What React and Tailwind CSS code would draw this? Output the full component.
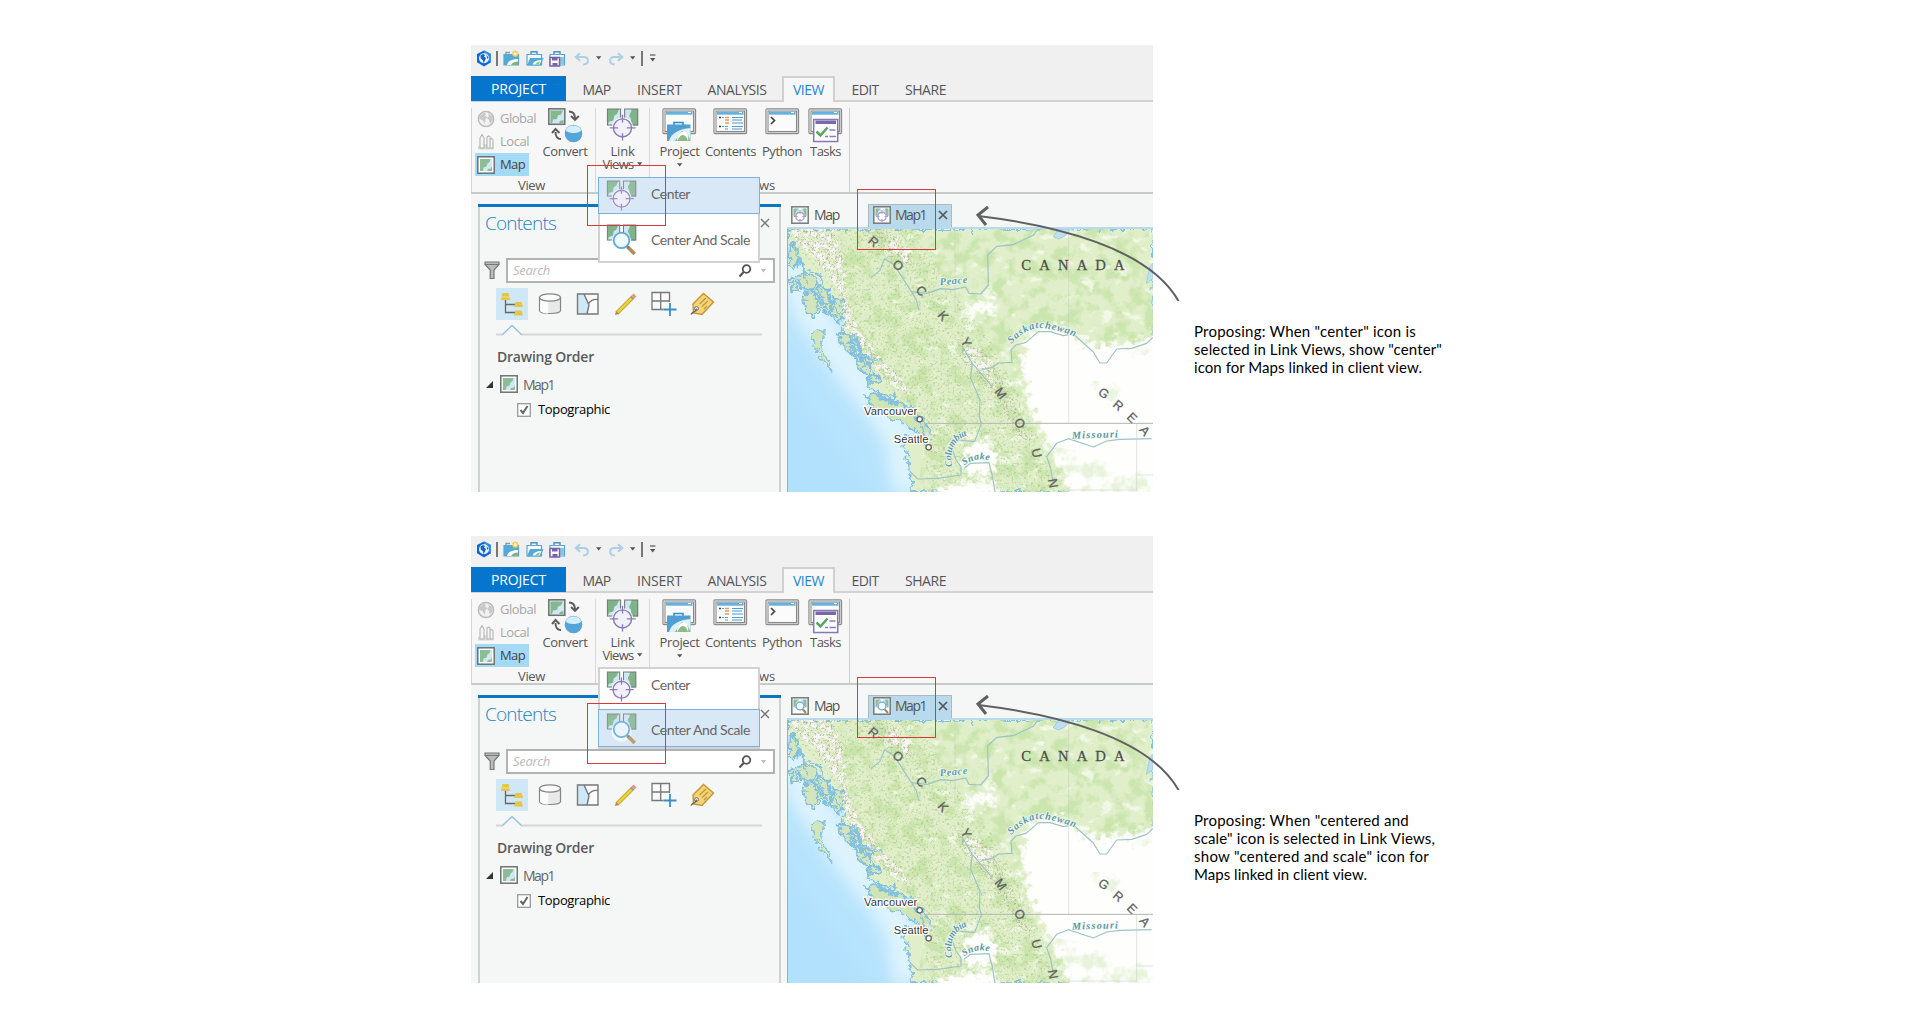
import React, { useLayoutEffect, useRef, useState } from "react";

/* Text on one line, spaced so that it fills the given width. */
function Fit({ w, className = "", children }) {
  const ref = useRef(null);
  const [ls, setLs] = useState(0);
  useLayoutEffect(() => {
    const natural = ref.current.getBoundingClientRect().width;
    setLs((w - natural) / children.length);
  }, []);
  return (
    <span ref={ref} style={{ letterSpacing: ls + "px" }} className={"inline-block shrink-0 whitespace-nowrap " + className}>
      {children}
    </span>
  );
}

const Svg = ({ w, h, vb, className = "", children }) => (
  <svg width={w} height={h} viewBox={vb || `0 0 ${w} ${h}`} className={"block shrink-0 " + className} fill="none">
    {children}
  </svg>
);

const Caret = ({ className = "" }) => (
  <Svg w={6} h={4} className={className}><path d="M0 .3h5.4L2.7 3.4z" fill="#555" /></Svg>
);

/* Quick access icons */
const Logo = () => (
  <Svg w={16} h={17}>
    <path d="M8 .5l7 3.600v8.200L8 16.400 1 12.300V4.100z" fill="#1467d3" />
    <path d="M8 .5l7 3.600v8.200L8 8z" fill="#2d8cf0" />
    <circle cx="8" cy="8.300" r="5" fill="#e6f5ff" />
    <path d="M4.500 5.500l2.500-1.500 2 1-1 1.600 2 1.400-1.200 3-1.200 2-.9-3-2-1.500zM10.500 5l2 2.400-1.200 1.500z" fill="#1c63bb" />
  </Svg>
);
const Case = ({ kind }) => (
  <Svg w={18} h={17}>
    {kind !== "new" && <path d="M5 4.500V1.700h6v2.800" stroke="#4a93c5" strokeWidth="1.400" />}
    {kind === "new" && <path d="M3 4.500V2.500h4" stroke="#7c9fb5" strokeWidth="1.300" />}
    <path d="M1 4.500h14.500v10.500H1z" fill={kind === "new" ? "#55a9d6" : "#f4fafc"} stroke="#5aa6d0" strokeWidth="1.200" />
    {kind === "open" && <path d="M4 8h13.500l-2.700 7.500H1z" fill="#55a9d6" />}
    {kind === "new" && <path d="M4 15c1-4 5-6 11-6v6z" fill="#fff" />}
    {kind === "new" && <path d="M8 15c1.500-2.500 4-3.500 7-3.500V15z" fill="#79b873" />}
    {kind === "open" && <path d="M6.500 14.500c1-3 4-4.500 9-4.500l-2 4.500z" fill="#fff" />}
    {kind === "open" && <path d="M9 14.600c1-2 3-3 5-3.200l-1.400 3.200z" fill="#8dc081" />}
    {kind === "save" && <path d="M9 7h6v7.500h-4z" fill="#8fc6d8" />}
    {kind === "save" && <path d="M1 7.500h9.500V16H1z" fill="#fff" stroke="#7a61a8" strokeWidth="1.500" />}
    {kind === "save" && <path d="M3 7.600h5.500v3H3zM3.500 13h5v3h-5z" fill="#7a61a8" />}
    {kind === "new" && <circle cx="12.300" cy="3.800" r="2.500" fill="#fdf3b5" stroke="#e5c64c" strokeWidth="1.700" strokeDasharray="1.600 .5" />}
  </Svg>
);
const Undo = ({ flip }) => (
  <Svg w={16} h={14} className={flip ? "-scale-x-100" : ""}>
    <path d="M6 1.200L1.700 5 6 8.800M2 5h8c5.300 0 5.300 7.400-.8 7.400" stroke="#abcfe6" strokeWidth="2" />
  </Svg>
);

/* Map thumbnails */
const MapTile = ({ s = 18, className = "" }) => (
  <Svg w={s} h={s} vb="0 0 18 18" className={className}>
    <rect x=".8" y=".8" width="16.400" height="16.400" fill="#fff" stroke="#6d7172" strokeWidth="1.500" />
    <path d="M3 3h12v12H3z" fill="#cfe8f2" />
    <path d="M3 3h10.500l-1 3-2 1.500-1 3-3 1L6 15H3zM10 15l1-2 3-.5 1-2.500v5z" fill="#8cbd94" />
  </Svg>
);
const Tiles = () => (
  <g>
    <path d="M1 1h14v17H1zM18.500 1h14v17h-14z" fill="#cfe6f5" />
    <path d="M1 1h12l-2 5-3 2-1 5-4 1-2 4zM25.500 1h7v17h-6c-2.500-3 0-6-2-8-3-3 2-5 1-9z" fill="#7fb489" />
    <path d="M1 1h13.500v16.500H1zM18.700 1h13.500v16.500H18.700z" stroke="#777b7d" strokeWidth="1.100" />
    <circle cx="16.500" cy="20.500" r="11" fill="#fff" opacity=".85" />
  </g>
);
const Target = () => (
  <g stroke="#8a7bb8">
    <circle cx="16.500" cy="20.500" r="9.300" fill="#f2f0fa" strokeWidth="1.500" />
    <path d="M16.500 7v8M16.500 26v7.500M3.500 20.500H12M21 20.500h9" strokeWidth="1.400" />
  </g>
);
const Lens = () => (
  <g>
    <path d="M23 25l8 8" stroke="#b58a57" strokeWidth="3.800" />
    <path d="M22 24l2.500 2.500" stroke="#777" strokeWidth="2" />
    <circle cx="16.500" cy="18" r="8.500" fill="#eef8fe" stroke="#5aa7d8" strokeWidth="1.900" />
  </g>
);
const LinkIcon = ({ s = 33, lens, dim }) => (
  <Svg w={s} h={s} vb="0 0 33 34" className={dim ? "opacity-80" : ""}>
    <Tiles />
    {lens ? <Lens /> : <Target />}
  </Svg>
);
const TabIcon = ({ lens }) => (
  <Svg w={18} h={18}>
    <rect x=".8" y=".8" width="16.400" height="16.400" fill="#fff" stroke="#77797b" strokeWidth="1.500" />
    <path d="M2.500 2.500h5.800V11H2.500zM9.800 2.500h5.700V11H9.800z" fill="#cde4ee" />
    <path d="M2.500 2.500h5L5 5.500l-1 4-1.500.5zM12 2.500h3.500V10H14l-1-3z" fill="#8fbd9b" />
    {lens ? (
      <g>
        <path d="M11.500 12l3.500 4" stroke="#b58550" strokeWidth="2" />
        <circle cx="9" cy="9" r="3.900" fill="#f2faff" stroke="#6aaedb" strokeWidth="1.300" />
      </g>
    ) : (
      <g stroke="#a79bcb">
        <circle cx="9" cy="10.500" r="4.200" fill="#fff" strokeWidth="1.300" />
        <path d="M9 4v4M9 13v3M3 10.500h3.500M11.500 10.500H15" strokeWidth="1" />
      </g>
    )}
  </Svg>
);

/* Ribbon icons */
const Globe = () => (
  <Svg w={18} h={18}>
    <circle cx="9" cy="9" r="7.600" fill="#f2f2f2" stroke="#bcbcbc" strokeWidth="1.500" />
    <path d="M3 6l4-3.500 2 1.500-1 2 2.500 1-2 2-.5 5-2.500-4L2 9zM11 3l4 3 1 4-3 4-1-4-2-2 2-2z" fill="#c9c9c9" />
  </Svg>
);
const Local = () => (
  <Svg w={18} h={18}>
    <path d="M1 13l4-2h10l2 5.500H1z" fill="#d4ddd1" />
    <path d="M3 15V5l2-3.500L7 5v10zM10 15V4l1.500-1L13 4v11zM13 15V6.500l1.500-1L16 6.500V15z" fill="#f5f5f5" stroke="#b5b5b5" strokeWidth="1.100" />
  </Svg>
);
const Convert = () => (
  <Svg w={35} h={35}>
    <rect x=".8" y=".8" width="16" height="15.500" fill="#cfe8f2" stroke="#6d7172" strokeWidth="1.500" />
    <path d="M2.500 2.500H15l-2 4-3 1-1 3.500-4 .5-1 4H2.500zM11 15l1-2 3.500-1v3z" fill="#86b88d" />
    <path d="M21 3.500c4 0 6 2 6 7M23 8l4 4 3.800-4M13 31c-4 0-5.500-3-5.500-7M4 25l3.500-4 4 4" stroke="#5b5b5b" strokeWidth="1.900" />
    <circle cx="25.500" cy="25.500" r="8.800" fill="#56a5d9" />
    <path d="M18 22c1-6 14-6 15 0 0 4-15 4-15 0z" fill="#d3edf9" />
  </Svg>
);
const Win = () => (
  <g>
    <rect x="1" y="1" width="32.500" height="24.500" rx="1" fill="#fbfbfb" stroke="#8a8a8a" strokeWidth="1.300" />
    <rect x="3" y="3" width="28.500" height="20.500" stroke="#8a8a8a" strokeWidth="1.100" />
    <rect x="1.900" y="1.900" width="30.700" height="22.700" stroke="#c9c9c9" strokeWidth=".9" />
    <path d="M4 3.500h26.500v3.200H4z" fill="#66b0dd" />
    <path d="M26 4.500h3" stroke="#fff" />
  </g>
);
const ProjectIcon = () => (
  <Svg w={35} h={35}>
    <Win />
    <path d="M12 17v-2.500h9V17" stroke="#2f8cc9" strokeWidth="1.500" />
    <path d="M5 16.500h23.500V33H5z" fill="#4f9fd5" />
    <path d="M7 33c2-8 10-12 21.500-13v13z" fill="#dcf0f8" />
    <path d="M20 23c5 1 7 5 8.500 10H12c3-1 4-7 8-10z" fill="#8cbb83" />
    <path d="M15 33c0-6 3-9 7-10 4 2 5 6 4 10-1-4-3-6-5-6-3 0-4 3-6 6z" fill="#fff" />
  </Svg>
);
const ContentsIcon = () => (
  <Svg w={35} h={35}>
    <Win />
    <path d="M6 9.500h2M6 18.500h2" stroke="#444" strokeWidth="1.500" />
    <path d="M9 9.500h2M9 18.500h2M19 9.500h11M19 12h10M19 15h11" stroke="#4a9fd6" strokeWidth="1.100" />
    <path d="M12 9.500h4M12 12h4M12 15h4" stroke="#ed9b62" strokeWidth="1.400" />
    <path d="M12 18.500h3M12 21h3M19 18.500h11M19 21h10" stroke="#4a9fd6" strokeWidth="1.200" />
  </Svg>
);
const PythonIcon = () => (
  <Svg w={35} h={35}><Win /><path d="M6 9l3.500 3.500L6 16" stroke="#444" strokeWidth="1.700" /></Svg>
);
const TasksIcon = () => (
  <Svg w={35} h={35}>
    <Win />
    <rect x="5.700" y="11.500" width="24" height="22" fill="#fdfdff" stroke="#8778b4" strokeWidth="1.500" />
    <path d="M7.500 12.500h20.500v3.500H7.500z" fill="#7a67a8" />
    <path d="M8.500 23.500l4 4 7-8" stroke="#57a55b" strokeWidth="2.500" />
    <path d="M21.500 22h6M21.500 28.500h6.500M17 28.500h3" stroke="#8d80ba" strokeWidth="1.300" />
  </Svg>
);

function BigButton({ icon, label, w, fw, second, caret }) {
  return (
    <div className={"flex shrink-0 flex-col items-center " + w}>
      <div className="h-[36px]">{icon}</div>
      <Fit w={fw} className="h-[14px] leading-[15px]">{label}</Fit>
      {second && (
        <div className="-mt-px flex items-center gap-[3px]">
          <Fit w={31} className="leading-[14px]">{second}</Fit>
          <Caret />
        </div>
      )}
      {caret && <Caret className="mt-[5px]" />}
    </div>
  );
}

const Tab = ({ w, fw, children }) => (
  <div className={"flex shrink-0 items-center justify-center " + w}><Fit w={fw}>{children}</Fit></div>
);

/* Toolbar of the contents pane */
const TreeIcon = () => (
  <Svg w={24} h={24}>
    <path d="M5.500 7v13.500H15M5.500 12.500H15" stroke="#666" strokeWidth="1.300" />
    <path d="M2.500 1h6l1.500 7H1zM15.500 10h6l1.500 5h-9zM15.500 18.500h6l1.500 5h-9z" fill="#e4c545" />
    <path d="M1.500 5h8" stroke="#f4e79f" strokeWidth=".8" />
  </Svg>
);
const CylIcon = () => (
  <Svg w={24} h={24}>
    <path d="M1.500 5.500v13c0 4 21 4 21 0v-13z" fill="#e9e9e9" stroke="#858585" strokeWidth="1.200" />
    <path d="M2.200 8v10.500c0 2 5 3 8 3V9z" fill="#fbfbfb" />
    <ellipse cx="12" cy="5.500" rx="10.500" ry="3.700" fill="#fafafa" stroke="#858585" strokeWidth="1.200" />
  </Svg>
);
const PolyIcon = () => (
  <Svg w={24} h={24}>
    <path d="M1.500 2h20.500v20H1.500z" fill="#fafafa" />
    <path d="M2 2h6l5 11-2 9H2z" fill="#cde8f8" />
    <path d="M1.500 2h20.500v20H1.500zM8 2l5 11-2 9M12.500 11.500C15 8 18 7 22 7.500" stroke="#777" strokeWidth="1.400" />
  </Svg>
);
const PencilIcon = () => (
  <Svg w={24} h={24}>
    <path d="M3 21L18 6" stroke="#b99b1f" strokeWidth="4" />
    <path d="M3.500 20.500L18 6" stroke="#ebcf3c" strokeWidth="2.700" />
    <path d="M17.500 6.500l1.500-1.500" stroke="#999" strokeWidth="4" />
    <path d="M19 5l2-2" stroke="#ee8f7d" strokeWidth="4" />
    <path d="M1 23l1-4 3 3z" fill="#aa8a55" />
  </Svg>
);
const GridIcon = () => (
  <Svg w={26} h={26}>
    <path d="M1 1.500h17.500v17H1zM9.700 1.500v17M1 10h17.500" stroke="#777" strokeWidth="1.300" fill="#fafafa" />
    <path d="M19 11v13M12.500 18H25.500" stroke="#f5f7f7" strokeWidth="4" />
    <path d="M19 12v13M12.500 18.500H25.500" stroke="#3f8dc0" strokeWidth="1.800" />
  </Svg>
);
const TagIcon = () => (
  <Svg w={26} h={24}>
    <path d="M4 12L14.500 1.500 24.500 10 13 22.500 4.500 21z" fill="#f4d477" stroke="#c69532" strokeWidth="1.400" />
    <path d="M10.500 12L17 6M13 14.500l6-5.500M15 17l3-3" stroke="#bd9740" strokeWidth="1.200" />
    <circle cx="7.500" cy="16.500" r="1.900" fill="#fff" stroke="#666" />
    <path d="M7.500 16.500c0 4-3 2-5.500 6" stroke="#666" strokeWidth="1.400" />
  </Svg>
);

function Ribbon() {
  return (
    <div className="flex h-[92px] shrink-0 border-b-2 border-[#c9c9c9] bg-[#f7f7f7] pt-[6px] text-[13px] text-[#555]">
      <div className="flex h-[84px] w-[125px] shrink-0 flex-col border-l border-[#d4d4d4]">
        <div className="flex h-[70px] shrink-0">
          <div className="flex w-[67px] shrink-0 flex-col pl-[3px]">
            <div className="flex h-[22px] items-center gap-[5px] pl-[2px] text-[#a6a6a6]"><Globe /><Fit w={36}>Global</Fit></div>
            <div className="flex h-[23px] items-center gap-[5px] pl-[2px] text-[#a6a6a6]"><Local /><Fit w={29}>Local</Fit></div>
            <div className="flex h-[23px] w-[54px] shrink-0 items-center gap-[5px] bg-[#a4d9f8] pl-[2px] text-[#444]"><MapTile /><Fit w={25}>Map</Fit></div>
          </div>
          <BigButton icon={<Convert />} label="Convert" w="w-[52px]" fw={45} />
        </div>
        <Fit w={27} className="ml-[46px] self-start leading-[14px]">View</Fit>
      </div>
      <div className="-ml-px flex h-[84px] w-[55px] shrink-0 justify-center border-x border-[#d9d9d9]">
        <BigButton icon={<LinkIcon />} label="Link" second="Views" w="w-[53px]" fw={24} />
      </div>
      <div className="flex h-[84px] w-[200px] shrink-0 flex-col border-r border-[#cfcfcf]">
        <div className="flex h-[70px] shrink-0 pl-[5px]">
          <BigButton icon={<ProjectIcon />} label="Project" caret w="w-[49px]" fw={40} />
          <BigButton icon={<ContentsIcon />} label="Contents" w="w-[53px]" fw={51} />
          <BigButton icon={<PythonIcon />} label="Python" w="w-[50px]" fw={40} />
          <BigButton icon={<TasksIcon />} label="Tasks" w="w-[37px]" fw={31} />
        </div>
        <Fit w={54} className="ml-[71px] self-start leading-[14px]">Windows</Fit>
      </div>
    </div>
  );
}

function ContentsPane() {
  return (
    <div className="flex w-[303px] shrink-0 flex-col border-x-2 border-[#d0d2d2] bg-[#f5f7f7]">
      <div className="-mx-[2px] h-[3px] shrink-0 bg-[#0a76c0]" />
      <div className="mt-px flex h-[30px] shrink-0 items-center justify-between pl-[5px] pr-[9px]">
        <Fit w={71} className="text-[19px] font-light text-[#1f83c1]">Contents</Fit>
        <Svg w={10} h={10}><path d="M1 1l8 8M9 1L1 9" stroke="#777" strokeWidth="1.400" /></Svg>
      </div>
      <div className="mt-[20px] flex h-[25px] shrink-0 items-center pl-[4px]">
        <Svg w={16} h={19}>
          <path d="M1 1h14v2.500L10 9v8.500H6.200V9L1 3.500z" fill="#bbb" stroke="#777" strokeWidth="1.200" />
          <path d="M1 3.500h14" stroke="#777" />
        </Svg>
        <div className="ml-[6px] flex h-[25px] w-[269px] items-center border-2 border-[#b2b2b2] bg-white pl-[5px]">
          <Fit w={37} className="text-[13px] italic text-[#bbb]">Search</Fit>
          <Svg w={14} h={14} className="ml-auto"><circle cx="8.500" cy="5" r="3.800" stroke="#555" strokeWidth="1.800" /><path d="M5.700 8L1.500 12.500" stroke="#555" strokeWidth="2.200" /></Svg>
          <Svg w={6} h={4} className="ml-[9px] mr-[6px]"><path d="M0 0h5L2.500 3.500z" fill="#bbb" /></Svg>
        </div>
      </div>
      <div className="mt-[5px] flex h-[32px] shrink-0 items-center pl-[16px]">
        <div className="flex h-[32px] w-[32px] items-center justify-center bg-[#cfe7f7]"><TreeIcon /></div>
        <div className="ml-[10px]"><CylIcon /></div>
        <div className="ml-[14px]"><PolyIcon /></div>
        <div className="ml-[14px]"><PencilIcon /></div>
        <div className="ml-[13px]"><GridIcon /></div>
        <div className="ml-[12px]"><TagIcon /></div>
      </div>
      <Svg w={266} h={12} className="ml-[16px] mt-[4px]">
        <path d="M0 10.500h6M26 10.500h240" stroke="#d5d7d7" strokeWidth="2" />
        <path d="M6 11l10-9.500L26 11" stroke="#92c2e2" strokeWidth="1.400" />
      </Svg>
      <div className="mt-[9px] flex h-[22px] items-center pl-[17px]">
        <Fit w={97} className="text-[14px] font-semibold text-[#5a5a5a]">Drawing Order</Fit>
      </div>
      <div className="mt-[6px] flex h-[22px] items-center pl-[6px]">
        <Svg w={7} h={7}><path d="M7 0v7H0z" fill="#333" /></Svg>
        <MapTile className="ml-[7px]" />
        <Fit w={31} className="ml-[5px] text-[14px] text-[#666]">Map1</Fit>
      </div>
      <div className="mt-[2px] flex h-[25px] items-center pl-[37px]">
        <Svg w={14} h={14}>
          <rect x=".7" y=".7" width="12.600" height="12.600" fill="#fff" stroke="#9a9a9a" strokeWidth="1.300" />
          <path d="M3.500 7L6 10l4.500-7" stroke="#666" strokeWidth="2" />
        </Svg>
        <Fit w={72} className="ml-[7px] text-[13px] text-black">Topographic</Fit>
      </div>
    </div>
  );
}

const LAND =
  "M22 27H1117V816H394L388 750 378 700 366 662 378 650 420 668 436 640 425 600 395 570 345 545 305 530 268 500 256 455 228 415 205 385 178 350 190 300 165 265 130 235 100 215 75 180 60 140 45 100 22 65Z";

function MapView({ id }) {
  const u = (n) => `url(#${n}-${id})`;
  const label = "fill-[#5a98b2] [font-family:'Liberation_Serif',serif] font-bold italic";
  const big = "fill-[#5f5f5f] [font-family:'Liberation_Sans',sans-serif]";
  const RANGE = [
    ["R", 279, 65, 40], ["O", 352, 136, 40], ["C", 422, 213, 45], ["K", 487, 288, 50], ["Y", 556, 367, 60],
    ["M", 660, 520, 52], ["O", 717, 610, 60], ["U", 768, 699, 75], ["N", 817, 790, 80],
    ["G", 969, 520, 35], ["R", 1013, 556, 40], ["E", 1054, 593, 45], ["A", 1092, 632, 50],
  ];
  return (
    <Svg w={365} h={263} vb="22 27 1095 789">
      <defs>
        <linearGradient id={"sea-" + id} x1="0" y1=".7" x2="0.42" y2=".48">
          <stop offset="0" stopColor="#b2e1fd" /><stop offset=".6" stopColor="#bde6fd" /><stop offset="1" stopColor="#d8f1fd" />
        </linearGradient>
        <filter id={"soft-" + id} x="-20%" y="-20%" width="140%" height="140%"><feGaussianBlur stdDeviation="22" /></filter>
        <filter id={"edge-" + id} x="-10%" y="-10%" width="120%" height="120%">
          <feGaussianBlur stdDeviation="7" result="b" />
          <feTurbulence type="fractalNoise" baseFrequency=".05" numOctaves="5" seed="4" result="n" />
          <feDisplacementMap in="b" in2="n" scale="80" xChannelSelector="R" yChannelSelector="G" />
        </filter>
        <filter id={"rough-" + id} x="-5%" y="-5%" width="110%" height="110%">
          <feTurbulence type="fractalNoise" baseFrequency=".055" numOctaves="3" seed="4" result="n" />
          <feDisplacementMap in="SourceGraphic" in2="n" scale="32" xChannelSelector="R" yChannelSelector="G" />
        </filter>
        <filter id={"green-" + id} x="0" y="0" width="100%" height="100%" colorInterpolationFilters="sRGB">
          <feTurbulence type="fractalNoise" baseFrequency=".022" numOctaves="6" seed="8" />
          <feColorMatrix values="0 0 0 0 .79  0 0 0 0 .895  0 0 0 0 .67  0 5 0 0 -2.300" result="c" />
          <feComposite in="c" in2="SourceGraphic" operator="in" />
        </filter>
        <filter id={"white-" + id} x="0" y="0" width="100%" height="100%" colorInterpolationFilters="sRGB">
          <feTurbulence type="fractalNoise" baseFrequency=".02 .03" numOctaves="6" seed="21" />
          <feColorMatrix values="0 0 0 0 .98  0 0 0 0 .99  0 0 0 0 .95  7 0 0 0 -4.400" result="c" />
          <feComposite in="c" in2="SourceGraphic" operator="in" />
        </filter>
        <filter id={"grain-" + id} x="0" y="0" width="100%" height="100%" colorInterpolationFilters="sRGB">
          <feTurbulence type="fractalNoise" baseFrequency=".16" numOctaves="3" seed="2" />
          <feColorMatrix values="0 0 0 0 .68  0 0 0 0 .66  0 0 0 0 .6  0 0 5 0 -2.750" result="c" />
          <feComposite in="c" in2="SourceGraphic" operator="in" />
        </filter>
        <filter id={"shade-" + id} x="0" y="0" width="100%" height="100%" colorInterpolationFilters="sRGB">
          <feTurbulence type="fractalNoise" baseFrequency=".14" numOctaves="3" seed="12" />
          <feColorMatrix values="0 0 0 0 .64  0 0 0 0 .75  0 0 0 0 .48  0 0 5 0 -2.700" result="c" />
          <feComposite in="c" in2="SourceGraphic" operator="in" />
        </filter>
        <filter id={"snow-" + id} x="0" y="0" width="100%" height="100%" colorInterpolationFilters="sRGB">
          <feTurbulence type="fractalNoise" baseFrequency=".06" numOctaves="4" seed="5" />
          <feColorMatrix values="0 0 0 0 .97  0 0 0 0 .96  0 0 0 0 .96  0 9 0 0 -4.200" result="c" />
          <feComposite in="c" in2="SourceGraphic" operator="in" />
        </filter>
        <clipPath id={"land-" + id}><path d={LAND} /></clipPath>
      </defs>
      <path d="M22 27h1095v789H22z" fill={u("sea")} />
      <path d="M22 120L85 270 160 380 225 470 300 560 362 660 385 816" stroke="#e0f4fe" strokeWidth="95" opacity=".95" filter={u("soft")} />
      <g filter={u("rough")} strokeLinejoin="round">
        <path d={LAND} fill="#e0efca" stroke="#86c3e2" strokeWidth="6" />
        <g fill="#d2e5bd" stroke="#80bfdf" strokeWidth="6">
          <path d="M28 70l22 10 4 40-14 30-16-20zM50 168l38-8 20 25-10 22-38 2zM66 218l30-6 14 30 2 34-12 18-28-30zM30 170l14 8 4 30-12 8zM112 196l26 14 14 40-8 34-30-22-12-34z" />
          <path d="M156 232l28 10 6 40-16 24-22-30zM170 340l26-4 16 30 14 26-10 10-32-26zM206 345l26 4 6 36-16 2zM222 408l30 6 16 34-8 24-24-28zM255 412l26-12 4 22-24 14zM262 460l34 8-10 24-22-6z" />
        </g>
        <path d="M92 335l42-2-14 42 16 40 20 40-28-28-22-38z" fill="#d2e6b9" stroke="#86c3e2" strokeWidth="4.500" />
        <path d="M252 528l24-8 50 22 60 28 26 24 34 32 4 26-40-14-50-34-40-12-50-34z" fill="#cfe5b3" stroke="#80bfdf" strokeWidth="5" />
      </g>
      <g clipPath={u("land")}>
        <path d="M150 27H1117V816H410L440 620 330 500 240 380 200 240Z" fill="#c9e2a8" filter={u("green")} opacity=".9" />
        <path d="M300 27H1117V816H410L440 600 400 400 330 230Z" fill="#fff" filter={u("white")} opacity=".7" />
        <path d="M22 27h380l120 190 100 130 90 170 90 200 40 99H440L430 600 360 560 240 400 200 280 120 160 30 80z" fill="#fff" filter={u("shade")} opacity=".5" />
        <g filter={u("edge")} fill="#fefefd">
          <path d="M732 350l40-30 80 10 60 35 60 15 90-15 60-20 50-10V850H870l-40-124-50-90-45-90-10-90z" />
          <path d="M560 670l60-10 35 50-10 40-60 20-40-30zM480 800l120-20 60 20-30 40-150 10z" />
          <path d="M555 255l85-15 10 30-100 20z" />
        </g>
        <path d="M820 680l120 20 100 50 90 0v86H830z" fill="#e6f1d3" filter={u("green")} opacity=".4" />
        <path d="M1040 345l77-15v60l-60 40zM900 480l140 10-40 60z" fill="#dcedc0" filter={u("green")} opacity=".35" />
        <path d="M30 27h130l30 100 14 120 20 60 60 90 80 80 30 50-80-40-60-90-60-70-14-110-70-90-60-60zM340 30l60 70-30 30-50-50zM560 380l70 40 20 30-50 10-60-50z" fill="#fff" filter={u("snow")} />
        <path d="M30 27h130l30 100 14 120 20 60 60 90 80 80 30 50-80-40-60-90-60-70-14-110-70-90-60-60zM230 27h100l80 110-40 10-80-70zM520 350l110 60 30 60 60 110 40 90-50-20-80-140-90-90z" fill="#fff" filter={u("grain")} opacity=".75" />
      </g>
      <g filter={u("rough")} stroke="#84c1e0" strokeWidth="5">
        <path d="M45 90l25 60 10 40M60 200l50 20 30 60M110 190l20 60 40-10M160 250l20 45M180 340l50 20 10 40 40 20M200 370l50 60 30 0M240 400l10 60 30 20M290 520l60 10 10 30M400 560l-5 25 30 40 15 60M340 520l5 30M215 350l20 30 0 40M90 150l30 20 10 30M250 440l40-20 14 6M380 545l14 20" />
      </g>
      <g stroke="#9cc4c6" strokeWidth="3.500" strokeLinejoin="round">
        <path d="M272 172l25-20 15-36 30 20 25 40 25 38 15 25 8 32M390 215l50 5 40-14 35 3 40-8 10 19 35 2 23-27-2-90 27-26 50-5 60-28 10-14" />
        <path d="M604 448l30-5 20-14 40-2-3-37 15-15 30-8 37-32 35 0 40 12 30-5 60 54 20 33 20 0 30-42 45-2 45-15 17-16 18-2" />
        <path d="M545 380l30 50 60 70M575 430l-5 45 28 65-2 50 6 20-20 55-50-5-18 25 12 35 15 20 0 25-70 10-60 2-20-20M550 745l20-15 55-2 10 40 8 48" />
        <path d="M818 790l-8-45-12-35 30-40 35-14 75 25 40-18 40-5 95-2" />
      </g>
      <path d="M818 50l16-23h34l-14 20-20 10zM1097 190l10-50 10-10v45z" fill="#bfdff0" stroke="#8cc5df" strokeWidth="2" />
      <g stroke="#c3c8c0" strokeWidth="2.500">
        <path d="M523 27v250M864 27v583M1068 610v200M1068 765h49M860 810h208" opacity=".6" />
        <path d="M430 610H1117" stroke="#b3b6af" strokeWidth="3" />
      </g>
      <text x="722" y="150" textLength="310" className="fill-[#4d4d4d] text-[44px] [font-family:'Liberation_Serif',serif]" stroke="#4d4d4d" strokeWidth=".8">CANADA</text>
      {RANGE.map(([c, x, y, r], i) => (
        <text key={i} x={x} y={y + 13} textAnchor="middle" stroke="#5f5f5f" strokeWidth=".8" transform={`rotate(${r} ${x} ${y})`} className={big + " text-[38px]"}>{c}</text>
      ))}
      <path id={"sask-" + id} d="M692 372Q740 320 785 324T888 352" />
      <path id={"col-" + id} d="M515 740Q500 665 562 645" />
      <path id={"pe-" + id} d="M478 196L562 188" />
      <path id={"mi-" + id} d="M874 656L1014 652" />
      <path id={"sn-" + id} d="M550 736Q588 708 634 724" />
      <g className={label} stroke="#f4faea" strokeWidth="4" paintOrder="stroke">
        <text className="text-[31px]"><textPath href={"#sask-" + id} textLength="210">Saskatchewan</textPath></text>
        <text className="text-[30px]"><textPath href={"#col-" + id} textLength="116">Columbia</textPath></text>
        <text className="text-[31px]"><textPath href={"#pe-" + id} textLength="83">Peace</textPath></text>
        <text className="text-[31px]"><textPath href={"#mi-" + id} textLength="138">Missouri</textPath></text>
        <text className="text-[29px]"><textPath href={"#sn-" + id} textLength="80">Snake</textPath></text>
      </g>
      <g className="fill-[#333] text-[34px] [font-family:'Liberation_Sans',sans-serif]" stroke="#fff" strokeWidth="7" paintOrder="stroke">
        <text x="250" y="585" textLength="160">Vancouver</text>
        <text x="339" y="669" textLength="105">Seattle</text>
      </g>
      <circle cx="417" cy="598" r="8" fill="#fff" stroke="#666" strokeWidth="4" />
      <circle cx="444" cy="682" r="8" fill="#fff" stroke="#666" strokeWidth="4" />
    </Svg>
  );
}

function Screen({ id, scale }) {
  return (
    <div className="relative flex h-[447px] w-[682px] shrink-0 flex-col overflow-hidden bg-[#f5f7f7] text-[13px] text-[#555]">
      <div className="flex h-[31px] shrink-0 items-center bg-[#f0f0f0] pb-[5px] pl-[5px]">
        <Logo />
        <div className="ml-[4px] h-[15px] w-[2px] bg-[#777]" />
        <div className="ml-[5px] flex items-center gap-[5px]"><Case kind="new" /><Case kind="open" /><Case kind="save" /></div>
        <div className="ml-[7px] mt-[2px]"><Undo /></div>
        <Caret className="ml-[6px]" />
        <div className="ml-[6px] mt-[2px]"><Undo flip /></div>
        <Caret className="ml-[6px]" />
        <div className="ml-[5px] h-[15px] w-[2px] bg-[#777]" />
        <Svg w={6} h={9} className="ml-[7px]"><path d="M0 1h5.400" stroke="#555" strokeWidth="1.200" /><path d="M0 4h5.400L2.700 7.500z" fill="#555" /></Svg>
      </div>
      <div className="flex h-[26px] shrink-0 bg-[#f0f0f0] text-[14px] shadow-[inset_0_-2px_#d2d2d2]">
        <div className="mb-px flex w-[95px] items-center justify-center bg-[#0575cd] text-white"><Fit w={55}>PROJECT</Fit></div>
        <Tab w="w-[61px]" fw={28}>MAP</Tab>
        <Tab w="w-[65px]" fw={45}>INSERT</Tab>
        <Tab w="w-[90px]" fw={59}>ANALYSIS</Tab>
        <div className="flex w-[53px] items-center justify-center border-x-2 border-t-2 border-[#d0d0d0] bg-[#f7f7f7] pb-px text-[#2488d4]"><Fit w={31}>VIEW</Fit></div>
        <Tab w="w-[60px]" fw={27}>EDIT</Tab>
        <Tab w="w-[61px]" fw={41}>SHARE</Tab>
      </div>
      <Ribbon />
      <div className="flex min-h-0 flex-1 pl-[7px] pt-[10px]">
        <ContentsPane />
        <div className="ml-[6px] flex w-[366px] shrink-0 flex-col">
          <div className="flex h-[23px] shrink-0 text-[14px]">
            <div className="flex w-[81px] items-center gap-[5px] pb-[2px] pl-[4px]"><TabIcon lens={scale} /><Fit w={25}>Map</Fit></div>
            <div className="flex w-[84px] items-center border border-b-0 border-[#b0b8bc] bg-[#b9d9ed] pb-[3px] pl-[4px]">
              <TabIcon lens={scale} />
              <Fit w={31} className="ml-[4px]">Map1</Fit>
              <Svg w={10} h={10} className="ml-[12px]"><path d="M1 1l8 8M9 1L1 9" stroke="#555" strokeWidth="1.700" /></Svg>
            </div>
          </div>
          <div className="h-[2px] shrink-0 bg-[#b9d9ed]" />
          <div className="border-l border-[#aaa]"><MapView id={id} /></div>
        </div>
      </div>

      {/* Link Views drop-down */}
      <div className={"absolute left-[127px] w-[162px] border-x-2 border-b-2 border-[#d2d2d2] bg-white text-[14px] text-[#666] [font-family:Lato,sans-serif] " + (scale ? "top-[131px] h-[82px] border-t-2" : "top-[132px] h-[86px]")}>
        <div className={"-mx-[2px] flex items-center pl-[7px] " + (scale ? "h-[35px] border border-transparent" : "h-[37px] border border-[#7db0dd] bg-[#d9e8f6]")}>
          <LinkIcon s={31} dim={!scale} /><Fit w={39} className="mb-[4px] ml-[14px]">Center</Fit>
        </div>
        <div className={"-mx-[2px] flex h-[38px] items-center border pl-[7px] " + (scale ? "mt-[5px] border-[#7db0dd] bg-[#d9e8f6]" : "mt-[6px] border-transparent")}>
          <LinkIcon s={31} lens dim={scale} /><Fit w={99} className={scale ? "ml-[14px] mt-[3px]" : "ml-[14px] mt-px"}>Center And Scale</Fit>
        </div>
      </div>

      {/* Call-out frames */}
      <div className={"absolute left-[116px] h-[61px] w-[79px] border border-[#d83a3a] " + (scale ? "top-[167px]" : "top-[120px]")} />
      <div className={"absolute left-[386px] h-[61px] w-[79px] border border-[#d83a3a] " + (scale ? "top-[141px]" : "top-[144px]")} />
    </div>
  );
}

const Arrow = ({ className }) => (
  <svg width="210" height="96" viewBox="0 0 210 96" fill="none" className={"absolute left-[502px] " + className}>
    <path d="M5.500 11C80 20 175 42 205.500 96" stroke="#606060" strokeWidth="2" />
    <path d="M15 2L5 10L13 20" stroke="#606060" strokeWidth="3" />
  </svg>
);

function Note({ className, lines }) {
  return (
    <div className={"ml-[41px] flex flex-col items-start text-[15px] leading-[18px] text-black [font-family:Lato,sans-serif] " + className}>
      {lines.map(([t, w]) => <Fit key={t} w={w}>{t}</Fit>)}
    </div>
  );
}

export default function App() {
  return (
    <main className="flex h-[1020px] w-full flex-col gap-[44px] overflow-hidden bg-white pl-[471px] pt-[45px] [font-family:'Open_Sans','Noto_Sans',sans-serif]">
      <section className="relative flex">
        <Screen id="a" />
        <Note className="pt-[277px]" lines={[['Proposing: When "center" icon is', 222], ['selected in Link Views, show "center"', 248], ["icon for Maps linked in client view.", 228]]} />
        <Arrow className="top-[160px]" />
      </section>
      <section className="relative flex">
        <Screen id="b" scale />
        <Note className="pt-[275px]" lines={[['Proposing: When "centered and', 215], ['scale" icon is selected in Link Views,', 241], ['show "centered and scale" icon for', 235], ["Maps linked in client view.", 173]]} />
        <Arrow className="top-[158px]" />
      </section>
    </main>
  );
}
